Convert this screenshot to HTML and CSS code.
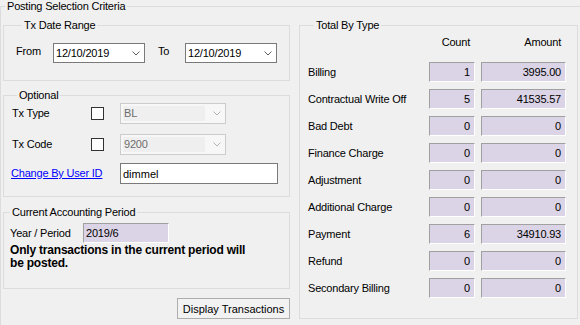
FILE: index.html
```html
<!DOCTYPE html>
<html lang="en">
<head>
    <meta charset="UTF-8">
    <meta name="viewport" content="width=device-width, initial-scale=1.0">
    <title>Posting Selection Criteria</title>
    <link rel="stylesheet" href="styles.css">
</head>
<body>

<fieldset class="group outer">
    <legend>Posting Selection Criteria</legend>
    <div class="columns">

        <div class="left-col">
            <fieldset class="group date-range">
                <legend>Tx Date Range</legend>
                <div class="date-row">
                    <span class="lbl lbl-from">From</span>
                    <div class="date-picker">
                        <span>12/10/2019</span>
                        <svg class="chev" width="8" height="5" viewBox="0 0 8 5"><polyline points="0.5,0.5 4,4 7.5,0.5" fill="none" stroke="#606060" stroke-width="1"/></svg>
                    </div>
                    <span class="lbl lbl-to">To</span>
                    <div class="date-picker">
                        <span>12/10/2019</span>
                        <svg class="chev" width="8" height="5" viewBox="0 0 8 5"><polyline points="0.5,0.5 4,4 7.5,0.5" fill="none" stroke="#606060" stroke-width="1"/></svg>
                    </div>
                </div>
            </fieldset>

            <fieldset class="group optional">
                <legend>Optional</legend>
                <div class="opt-grid">
                    <span class="lbl">Tx Type</span>
                    <span class="check"></span>
                    <div class="combo">
                        <span class="combo-text">BL</span>
                        <svg class="chev" width="8" height="5" viewBox="0 0 8 5"><polyline points="0.5,0.5 4,4 7.5,0.5" fill="none" stroke="#b4b4b4" stroke-width="1"/></svg>
                    </div>

                    <span class="lbl">Tx Code</span>
                    <span class="check"></span>
                    <div class="combo">
                        <span class="combo-text">9200</span>
                        <svg class="chev" width="8" height="5" viewBox="0 0 8 5"><polyline points="0.5,0.5 4,4 7.5,0.5" fill="none" stroke="#b4b4b4" stroke-width="1"/></svg>
                    </div>
                </div>
                <div class="user-row">
                    <a class="link" href="#">Change By User ID</a>
                    <input class="textbox" type="text" value="dimmel">
                </div>
            </fieldset>

            <fieldset class="group period">
                <legend>Current Accounting Period</legend>
                <div class="period-body">
                    <div class="period-row">
                        <span class="lbl lbl-period">Year / Period</span>
                        <div class="field">2019/6</div>
                    </div>
                    <p class="note">Only transactions in the current period will<br>be posted.</p>
                </div>
            </fieldset>

            <div class="actions">
                <button class="btn">Display Transactions</button>
            </div>
        </div>

        <fieldset class="group totals">
            <legend>Total By Type</legend>
            <div class="totals-head">
                <span></span>
                <span class="head">Count</span>
                <span class="head">Amount</span>
            </div>
            <div class="totals-grid">
                <span class="lbl">Billing</span><div class="val">1</div><div class="val">3995.00</div>
                <span class="lbl">Contractual Write Off</span><div class="val">5</div><div class="val">41535.57</div>
                <span class="lbl">Bad Debt</span><div class="val">0</div><div class="val">0</div>
                <span class="lbl">Finance Charge</span><div class="val">0</div><div class="val">0</div>
                <span class="lbl">Adjustment</span><div class="val">0</div><div class="val">0</div>
                <span class="lbl">Additional Charge</span><div class="val">0</div><div class="val">0</div>
                <span class="lbl">Payment</span><div class="val">6</div><div class="val">34910.93</div>
                <span class="lbl">Refund</span><div class="val">0</div><div class="val">0</div>
                <span class="lbl">Secondary Billing</span><div class="val">0</div><div class="val">0</div>
            </div>
        </fieldset>

    </div>
</fieldset>

</body>
</html>
```

FILE: styles.css
```css
* {
    box-sizing: border-box;
}
body {
    margin: 0;
    width: 580px;
    height: 325px;
    overflow: hidden;
    background-color: #f0f0f0;
    font-family: "Liberation Sans", Arial, sans-serif;
    font-size: 11px;
    letter-spacing: -0.2px;
    color: #000;
}
.group {
    margin: 0;
    padding: 0;
    min-width: 0;
    border: 1px solid #dcdcdc;
}
.group legend {
    margin-left: 6px;
    padding: 0 2px;
    line-height: 13px;
}
.outer {
    width: 600px;
    padding: 6px 0 12px 2px;
}
.outer > legend {
    margin-left: 2px;
}
.columns {
    display: flex;
    align-items: flex-start;
    gap: 9px;
}
.left-col {
    width: 287px;
    display: flex;
    flex-direction: column;
}

/* date range */
.date-range {
    padding: 11px 0 17px 12px;
}
.date-row {
    display: flex;
    align-items: center;
    height: 20px;
}
.lbl {
    white-space: nowrap;
    line-height: 13px;
}
.lbl-from {
    width: 37px;
    margin-top: -3px;
}
.lbl-to {
    width: 27px;
    margin-left: 13px;
    margin-top: -3px;
}
.date-picker {
    width: 92px;
    height: 20px;
    border: 1px solid #7a7a7a;
    background-color: #fff;
    display: flex;
    align-items: center;
    justify-content: space-between;
    padding: 0 4px 0 2px;
}
.chev {
    display: block;
}

/* optional */
.optional {
    margin-top: 8px;
    padding: 1px 0 12px 7px;
}
.opt-grid {
    display: grid;
    grid-template-columns: 80px 29px 1fr;
    grid-auto-rows: 21px;
    row-gap: 10px;
    align-items: center;
}
.opt-grid .lbl {
    padding-left: 1px;
}
.check {
    width: 13px;
    height: 13px;
    border: 1px solid #333;
    background-color: #fff;
}
.combo {
    width: 106px;
    height: 21px;
    border: 1px solid #cccccc;
    background-color: #f7f7f7;
    display: flex;
    align-items: center;
    padding: 2px 4px 2px 2px;
    color: #6d6d6d;
}
.combo-text {
    flex: 1;
    height: 100%;
    background-color: #efefef;
    line-height: 15px;
    padding-left: 1px;
    margin-right: 8px;
}
.user-row {
    display: flex;
    align-items: center;
    height: 21px;
    margin-top: 8px;
}
.link {
    width: 109px;
    color: #0000ff;
    white-space: nowrap;
    line-height: 13px;
}
.textbox {
    width: 158px;
    height: 21px;
    margin: 0;
    border: 1px solid #7a7a7a;
    padding: 0 2px;
    font: inherit;
    color: #000;
    background-color: #fff;
}

/* current period */
.period {
    margin-top: 9px;
}
.period-body {
    padding: 4px 0 18px 6px;
}
.period-row {
    display: flex;
    align-items: center;
}
.lbl-period {
    width: 73px;
}
.field {
    width: 86px;
    height: 20px;
    border-style: solid;
    border-width: 1px;
    border-color: #a0a0a0 #fff #fff #a0a0a0;
    background-color: #dbd3e6;
    line-height: 18px;
    padding-left: 2px;
}
.note {
    margin: 1px 0 0;
    font-size: 12px;
    font-weight: bold;
    letter-spacing: -0.2px;
    line-height: 13px;
}
.actions {
    display: flex;
    justify-content: flex-end;
    margin-top: 9px;
}
.btn {
    width: 113px;
    height: 21px;
    padding: 0;
    border: 1px solid #adadad;
    background-color: #f2f2f2;
    font: inherit;
    color: #000;
}

/* totals */
.totals {
    width: 279px;
    padding: 4px 11px 20px 8px;
}
.totals-head,
.totals-grid {
    display: grid;
    grid-template-columns: 1fr 46px 85px;
    column-gap: 6px;
}
.totals-head {
    line-height: 13px;
    margin-bottom: 13px;
}
.head {
    text-align: right;
    padding-right: 5px;
}
.totals-grid {
    grid-auto-rows: 20px;
    row-gap: 7px;
    align-items: center;
}
.val {
    height: 20px;
    border-style: solid;
    border-width: 1px;
    border-color: #a0a0a0 #fff #fff #a0a0a0;
    background-color: #dbd3e6;
    text-align: right;
    line-height: 18px;
    padding-right: 4px;
}
```
